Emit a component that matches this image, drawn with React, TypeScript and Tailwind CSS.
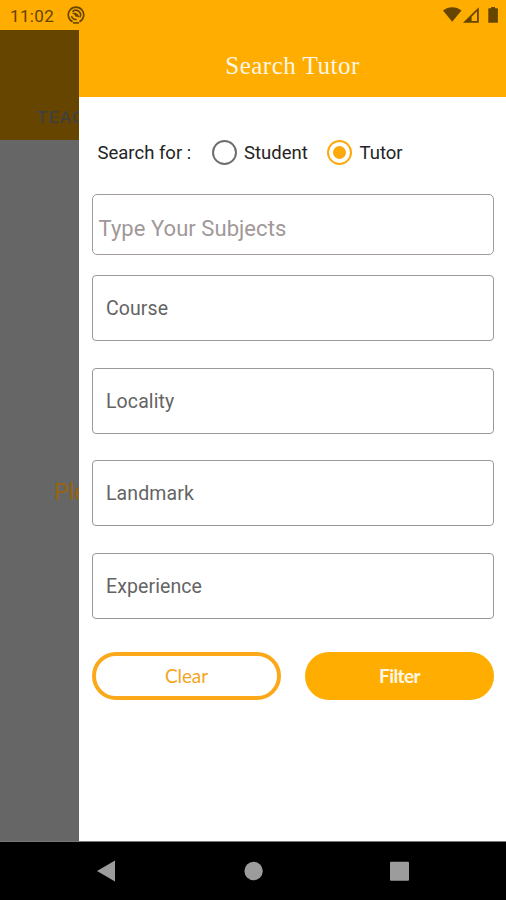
import React from "react";

function StatusBar() {
  return (
    <header className="flex h-[30px] shrink-0 items-center bg-[#ffad00] pl-[10px] pr-[7px] text-[#654500]">
      <span className="mt-[2px] w-[57px] text-[17px] leading-5 tracking-[0.35px]">11:02</span>
      <svg className="h-[18px] w-[18px]" viewBox="0 0 18 18" fill="none" stroke="currentColor">
        <path d="M5.6 15.8A7.7 7.7 0 1 1 12.4 15.8" strokeWidth="1.7" />
        <path d="M6 16.9h6" strokeWidth="1.6" />
        <path d="M5.4 5.7A4.7 4.7 0 0 1 12.8 11.4M4.5 10A4.7 4.7 0 0 0 9.8 13.5" strokeWidth="1.6" />
        <path d="M5 7.2c3.2-1.4 7 .6 7.2 4.6-1.4-1.3-2.6-1.3-3.6-1-.2-1.5-1.6-2.8-3.6-3.6Z" fill="currentColor" stroke="none" />
      </svg>
      <svg className="ml-auto h-[16px] w-[56px]" viewBox="0 0 56 16" fill="currentColor">
        <path d="M0 3.6C5-.9 13.5-.9 18.5 3.6L9.2 14.8Z" />
        <path fillRule="evenodd" d="M20 15.8 35.8.2V15.8ZM28.6 9.8v4.3h5.4V4.3Z" />
        <path d="M46 1.2h2.2V0h3.8v1.2h2.2q.7 0 .7.7v13.9H45.3V1.9q0-.7.7-.7Z" />
      </svg>
    </header>
  );
}

function Radio({ label, checked }: { label: string; checked?: boolean }) {
  return (
    <label className="flex items-center">
      <span
        className={
          checked
            ? "flex h-[25px] w-[25px] items-center justify-center rounded-full border-[2.5px] border-[#ffa80c]"
            : "h-[25px] w-[25px] rounded-full border-[2.5px] border-[#6e6e6e]"
        }
      >
        {checked && <span className="h-[13px] w-[13px] rounded-full bg-[#ffa80c]" />}
      </span>
      <span className="ml-[7.5px] text-[18.5px] leading-6">{label}</span>
    </label>
  );
}

function Field({ label }: { label: string }) {
  return (
    <div className="flex h-[66px] items-center rounded-[4px] border border-[#999] pl-[13px] pt-px text-[19.5px] tracking-[0.1px] text-[#646464]">
      {label}
    </div>
  );
}

function NavBar() {
  return (
    <nav className="h-[59px] shrink-0 border-t border-[#777] bg-black">
      <svg className="h-[58px] w-[506px]" viewBox="0 0 506 58" fill="#9c9c9c">
        <path d="M97 29 115 18.5v21Z" />
        <circle cx="253.6" cy="29" r="9.2" />
        <rect x="390" y="19.7" width="19" height="19" rx="1" />
      </svg>
    </nav>
  );
}

export default function App() {
  return (
    <div className="flex h-[900px] w-[506px] flex-col overflow-hidden bg-white font-['Roboto',sans-serif]">
      <StatusBar />
      <div className="flex min-h-0 flex-1">
        <aside className="w-[79px] shrink-0 overflow-hidden whitespace-nowrap bg-[#666]">
          <div className="h-[110px] bg-[#664500] pl-[37px] pt-[77px] text-[17px] font-medium leading-5 tracking-[1.4px] text-[#42403f]">
            TEACHER
          </div>
          <p className="mt-[339px] pl-[54px] text-[23px] leading-7 text-[#96640f]">Please</p>
        </aside>
        <main className="min-w-0 flex-1 bg-white">
          <h1 className="flex h-[67px] items-center justify-center bg-[#ffad00] pt-[4px] font-['Liberation_Serif',serif] text-[25px] tracking-[0.5px] text-[#fff7e5]">
            Search Tutor
          </h1>
          <div className="flex h-[97px] items-center pl-[18.5px] pt-[14px] text-[#242424]">
            <span className="w-[114px] text-[18.5px] leading-6">Search for :</span>
            <div className="flex gap-[19.3px]">
              <Radio label="Student" />
              <Radio label="Tutor" checked />
            </div>
          </div>
          <div className="pl-[13px] pr-[12px]">
            <div className="flex h-[61px] items-center rounded-[5px] border border-[#a39b9b] pl-[5.5px] pt-[8px] text-[22px] tracking-[0.05px] text-[#a19898]">
              Type Your Subjects
            </div>
            <div className="mt-[20px] flex flex-col gap-[26.7px]">
              <Field label="Course" />
              <Field label="Locality" />
              <Field label="Landmark" />
              <Field label="Experience" />
            </div>
            <div className="mt-[33px] grid grid-cols-2 gap-[24px] font-['Lato',sans-serif] text-[19px] tracking-[-0.1px]">
              <button className="h-[48px] rounded-full border-4 border-[#fba91a] text-[#f5a524]">Clear</button>
              <button className="h-[48px] rounded-full bg-[#ffad00] font-bold tracking-[-0.6px] text-[#fff8e8]">Filter</button>
            </div>
          </div>
        </main>
      </div>
      <NavBar />
    </div>
  );
}
